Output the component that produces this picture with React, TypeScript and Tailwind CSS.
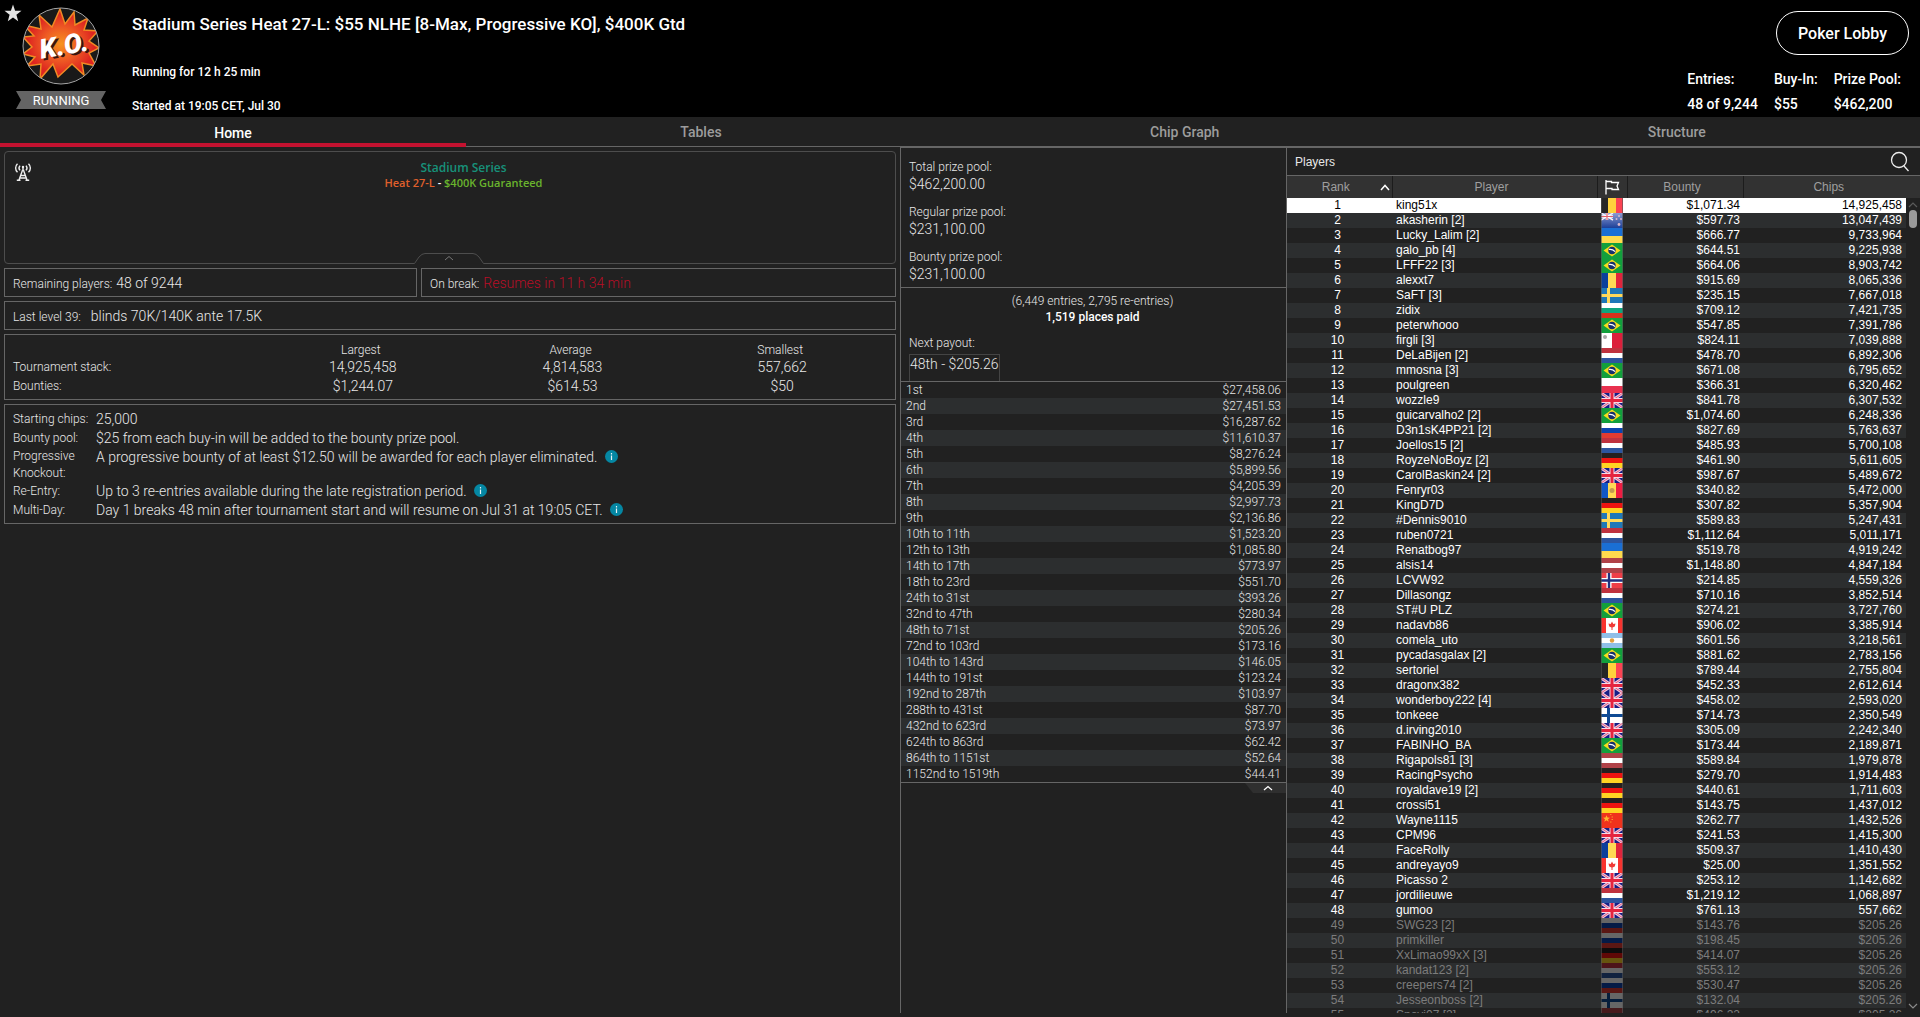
import { useState } from "react";
import type { ReactNode } from "react";

type Player = [name: string, flag: string, bounty: string, chips: string];

const players: Player[] = [
  ["king51x", "be", "$1,071.34", "14,925,458"],
  ["akasherin [2]", "nz", "$597.73", "13,047,439"],
  ["Lucky_Lalim [2]", "ua", "$666.77", "9,733,964"],
  ["galo_pb [4]", "br", "$644.51", "9,225,938"],
  ["LFFF22 [3]", "br", "$664.06", "8,903,742"],
  ["alexxt7", "ro", "$915.69", "8,065,336"],
  ["SaFT [3]", "se", "$235.15", "7,667,018"],
  ["zidix", "bg", "$709.12", "7,421,735"],
  ["peterwhooo", "br", "$547.85", "7,391,786"],
  ["firgli [3]", "mt", "$824.11", "7,039,888"],
  ["DeLaBijen [2]", "nl", "$478.70", "6,892,306"],
  ["mmosna [3]", "br", "$671.08", "6,795,652"],
  ["poulgreen", "pl", "$366.31", "6,320,462"],
  ["wozzle9", "gb", "$841.78", "6,307,532"],
  ["guicarvalho2 [2]", "br", "$1,074.60", "6,248,336"],
  ["D3n1sK4PP21 [2]", "ru", "$827.69", "5,763,637"],
  ["Joellos15 [2]", "nl", "$485.93", "5,700,108"],
  ["RoyzeNoBoyz [2]", "de", "$461.90", "5,611,605"],
  ["CarolBaskin24 [2]", "gb", "$987.67", "5,489,672"],
  ["Fenryr03", "ad", "$340.82", "5,472,000"],
  ["KingD7D", "de", "$307.82", "5,357,904"],
  ["#Dennis9010", "se", "$589.83", "5,247,431"],
  ["ruben0721", "nl", "$1,112.64", "5,011,171"],
  ["Renatbog97", "ua", "$519.78", "4,919,242"],
  ["alsis14", "lv", "$1,148.80", "4,847,184"],
  ["LCVW92", "no", "$214.85", "4,559,326"],
  ["Dillasongz", "nl", "$710.16", "3,852,514"],
  ["ST#U PLZ", "br", "$274.21", "3,727,760"],
  ["nadavb86", "ca", "$906.02", "3,385,914"],
  ["comela_uto", "ar", "$601.56", "3,218,561"],
  ["pycadasgalax [2]", "br", "$881.62", "2,783,156"],
  ["sertoriel", "be", "$789.44", "2,755,804"],
  ["dragonx382", "gb", "$452.33", "2,612,614"],
  ["wonderboy222 [4]", "gb", "$458.02", "2,593,020"],
  ["tonkeee", "fi", "$714.73", "2,350,549"],
  ["d.irving2010", "gb", "$305.09", "2,242,340"],
  ["FABINHO_BA", "br", "$173.44", "2,189,871"],
  ["Rigapols81 [3]", "lv", "$589.84", "1,979,878"],
  ["RacingPsycho", "de", "$279.70", "1,914,483"],
  ["royaldave19 [2]", "de", "$440.61", "1,711,603"],
  ["crossi51", "de", "$143.75", "1,437,012"],
  ["Wayne1115", "cn", "$262.77", "1,432,526"],
  ["CPM96", "gb", "$241.53", "1,415,300"],
  ["FaceRolly", "ro", "$509.37", "1,410,430"],
  ["andreyayo9", "ca", "$25.00", "1,351,552"],
  ["Picasso 2", "gb", "$253.12", "1,142,682"],
  ["jordilieuwe", "nl", "$1,219.12", "1,068,897"],
  ["gumoo", "gb", "$761.13", "557,662"],
  ["SWG23 [2]", "ru", "$143.76", "$205.26"],
  ["primkiller", "ru", "$198.45", "$205.26"],
  ["XxLimao99xX [3]", "de", "$414.07", "$205.26"],
  ["kandat123 [2]", "nl", "$553.12", "$205.26"],
  ["creepers74 [2]", "ru", "$530.47", "$205.26"],
  ["Jesseonboss [2]", "fi", "$132.04", "$205.26"],
  ["Snovi07 [2]", "lv", "$496.22", "$205.26"],
];

// everyone ranked below this is already out
const PLAYERS_LEFT = 48;

const payouts = [
  ["1st", "$27,458.06"],
  ["2nd", "$27,451.53"],
  ["3rd", "$16,287.62"],
  ["4th", "$11,610.37"],
  ["5th", "$8,276.24"],
  ["6th", "$5,899.56"],
  ["7th", "$4,205.39"],
  ["8th", "$2,997.73"],
  ["9th", "$2,136.86"],
  ["10th to 11th", "$1,523.20"],
  ["12th to 13th", "$1,085.80"],
  ["14th to 17th", "$773.97"],
  ["18th to 23rd", "$551.70"],
  ["24th to 31st", "$393.26"],
  ["32nd to 47th", "$280.34"],
  ["48th to 71st", "$205.26"],
  ["72nd to 103rd", "$173.16"],
  ["104th to 143rd", "$146.05"],
  ["144th to 191st", "$123.24"],
  ["192nd to 287th", "$103.97"],
  ["288th to 431st", "$87.70"],
  ["432nd to 623rd", "$73.97"],
  ["624th to 863rd", "$62.42"],
  ["864th to 1151st", "$52.64"],
  ["1152nd to 1519th", "$44.41"],
];

const tabs = ["Home", "Tables", "Chip Graph", "Structure"];

const horizontal = (a: string, b: string, c: string) => (
  <>
    <rect width="22" height="5" fill={a} />
    <rect y="5" width="22" height="5" fill={b} />
    <rect y="10" width="22" height="5" fill={c} />
  </>
);

const vertical = (a: string, b: string, c: string) => (
  <>
    <rect width="7" height="15" fill={a} />
    <rect x="7" width="8" height="15" fill={b} />
    <rect x="15" width="7" height="15" fill={c} />
  </>
);

const nordic = (bg: string, cross: string) => (
  <>
    <rect width="22" height="15" fill={bg} />
    <rect x="6" width="3" height="15" fill={cross} />
    <rect y="6" width="22" height="3" fill={cross} />
  </>
);

const flags: Record<string, ReactNode> = {
  be: vertical("#262626", "#ffd23c", "#fb4353"),
  ro: vertical("#0b3f9c", "#ffd955", "#e0243c"),
  ad: (
    <>
      {vertical("#1257c8", "#ffd955", "#ee1c42")}
      <circle cx="11" cy="7.5" r="2.5" fill="#c39a4e" />
    </>
  ),
  bg: horizontal("#ffffff", "#0fa57c", "#d8301b"),
  nl: horizontal("#c0323f", "#ffffff", "#2c559f"),
  ru: horizontal("#ffffff", "#0d44ae", "#e23b32"),
  de: horizontal("#252020", "#ee1410", "#ffd323"),
  lv: horizontal("#b04248", "#ffffff", "#b04248"),
  ar: (
    <>
      {horizontal("#8fbfe8", "#ffffff", "#8fbfe8")}
      <circle cx="11" cy="7.5" r="2.2" fill="#e0a040" />
    </>
  ),
  ua: (
    <>
      <rect width="22" height="8" fill="#1a6fd4" />
      <rect y="8" width="22" height="7" fill="#ffda4d" />
    </>
  ),
  pl: (
    <>
      <rect width="22" height="8" fill="#ffffff" />
      <rect y="8" width="22" height="7" fill="#e8314f" />
    </>
  ),
  mt: (
    <>
      <rect width="11" height="15" fill="#ffffff" />
      <rect x="11" width="11" height="15" fill="#dc1f3b" />
      <circle cx="4" cy="4" r="2" fill="#a8a8a8" />
    </>
  ),
  se: nordic("#1f78b8", "#ffd95a"),
  fi: nordic("#ffffff", "#0f4a94"),
  no: (
    <>
      <rect width="22" height="15" fill="#ee3e48" />
      <path d="M8 0v15M0 7.5h22" stroke="#fff" strokeWidth="5" />
      <path d="M8 0v15M0 7.5h22" stroke="#20317e" strokeWidth="2.4" />
    </>
  ),
  br: (
    <>
      <rect width="22" height="15" fill="#12a03c" />
      <path d="M11 1.5 19.5 7.5 11 13.5 2.5 7.5Z" fill="#f6dc1c" />
      <circle cx="11" cy="7.5" r="3.7" fill="#17306c" />
      <path d="M7.8 6.4q3.6-.6 6.3 2.2" stroke="#fff" strokeWidth="1.2" fill="none" />
    </>
  ),
  ca: (
    <>
      {vertical("#f8332f", "#ffffff", "#f8332f")}
      <rect x="5" width="2" height="15" fill="#fff" />
      <rect x="15" width="2" height="15" fill="#fff" />
      <path d="M11 3.5 12.3 6l2.2-.4-.7 3-2.3.8V12h-1V9.4L8.2 8.6l-.7-3 2.2.4Z" fill="#f03a36" />
    </>
  ),
  cn: (
    <>
      <rect width="22" height="15" fill="#f0321c" />
      <path d="M5.5 2.2l1 2.4 2.5.1-2 1.6.7 2.4-2.2-1.4-2.2 1.4.7-2.4-2-1.6 2.5-.1Z" fill="#ffb52e" />
      <path d="M9 1.5h1.5M10.5 4h1.5M10.5 6.5h1.5M9 9h1.5" stroke="#f8902a" />
    </>
  ),
  gb: (
    <>
      <rect width="22" height="15" fill="#171e86" />
      <path d="M0 0 22 15M22 0 0 15" stroke="#f3c8dc" strokeWidth="3" />
      <path d="M0 0 22 15M22 0 0 15" stroke="#dd5b80" strokeWidth="1" />
      <path d="M11 0v15M0 7.5h22" stroke="#f7dbe6" strokeWidth="5" />
      <path d="M11 0v15M0 7.5h22" stroke="#e5243f" strokeWidth="3" />
    </>
  ),
  nz: (
    <>
      <linearGradient id="nzField" x2="0" y2="1">
        <stop offset="0" stopColor="#8d9bd2" />
        <stop offset="1" stopColor="#1c3f98" />
      </linearGradient>
      <rect width="22" height="15" fill="url(#nzField)" />
      <path d="M0 0 12 7M12 0 0 7" stroke="#f2f2fa" strokeWidth="1.5" />
      <path d="M6 0v7M0 3.5h12" stroke="#fff" strokeWidth="2.5" />
      <path d="M6 0v7M0 3.5h12" stroke="#e2606c" strokeWidth="1.2" />
      <circle cx="18" cy="3" r="1" fill="#d9b8cc" />
      <circle cx="15.5" cy="6" r="1" fill="#d9b8cc" />
      <circle cx="20" cy="6" r="1" fill="#d9b8cc" />
      <circle cx="18" cy="11.5" r="1.4" fill="#d9b8cc" />
    </>
  ),
};

const Flag = ({ code, dimmed }: { code: string; dimmed: boolean }) => (
  <svg viewBox="0 0 22 15" className="block h-[15px] w-[22px]">
    {flags[code]}
    {dimmed && <rect width="22" height="15" fill="#000" opacity="0.6" />}
    <rect x="0.5" y="-1" width="21" height="17" fill="none" stroke="#555" strokeOpacity="0.6" />
  </svg>
);

const Info = ({ label }: { label: string }) => (
  <button
    type="button"
    aria-label={label}
    className="ml-1 inline-flex size-[13px] items-center justify-center rounded-full bg-[#0587a3] align-[-1px]"
  >
    <svg viewBox="0 0 13 13" className="size-[13px]">
      <path d="M6.5 3v1.5M6.5 5.5v4.5" stroke="#e8f4f7" strokeWidth="1.2" />
    </svg>
  </button>
);

const KoBadge = () => (
  <svg viewBox="0 0 78 78" className="size-[78px]">
    <defs>
      <radialGradient id="burst" cx="50%" cy="50%" r="52%">
        <stop offset="0" stopColor="#f7931e" />
        <stop offset="0.45" stopColor="#ee5a24" />
        <stop offset="0.85" stopColor="#dd2420" />
      </radialGradient>
      <clipPath id="disc">
        <circle cx="39" cy="39" r="38" />
      </clipPath>
    </defs>
    <circle cx="39" cy="39" r="38" fill="#191919" />
    <g clipPath="url(#disc)">
      <path
        d="M17 8 30 20 38 2 43 17 52 5 53 18 66 11 62 23 76 24 67 34 77 41 67 46 74 59 60 56 62 68 50 57 36 70 31 57 18 72 19 57 5 59 13 50 1 47 10 40 1 30 12 29 2 18 19 22Z"
        fill="url(#burst)"
        stroke="#f08a24"
        strokeWidth="1.5"
      />
    </g>
    <circle cx="39" cy="39" r="38" fill="none" stroke="#a5a5a5" />
    <g
      transform="rotate(-10 40 40)"
      fontFamily="Roboto, sans-serif"
      fontSize="27"
      fontWeight="900"
      fontStyle="italic"
      textAnchor="middle"
    >
      <text x="44" y="50" fill="#3a1410" aria-hidden="true">
        K.O.
      </text>
      <text x="42" y="48" fill="#fff">
        K.O.
      </text>
    </g>
  </svg>
);

const Stat = ({ label, value }: { label: string; value: string }) => (
  <div>
    <dt className="text-xs leading-4">{label}</dt>
    <dd className="text-sm leading-[18px]">{value}</dd>
  </div>
);

const Header = () => (
  <header className="flex h-[117px] shrink-0 justify-between bg-black font-medium text-white">
    <div className="flex">
      <button type="button" aria-label="Favourite" className="mt-1 ml-1 size-[18px]">
        <svg viewBox="0 0 18 18" className="size-[18px]">
          <path
            d="M9 0.5 11.1 6.7 17.5 6.8 12.4 10.8 14.2 17.2 9 13.5 3.8 17.2 5.6 10.8 0.5 6.8 6.9 6.7Z"
            fill="#e4e4e4"
          />
        </svg>
      </button>
      <div className="ml-[-6px] flex w-[90px] flex-col items-center pt-[7px]">
        <KoBadge />
        <div className="relative mt-[6px] flex h-[18px] w-[90px] items-center justify-center">
          <svg viewBox="0 0 90 18" className="absolute inset-0 h-[18px] w-[90px]">
            <path d="M0 0H90L85 9 90 18H0L5 9Z" fill="#646464" />
          </svg>
          <span className="relative pt-px text-[13px] font-normal">RUNNING</span>
        </div>
      </div>
      <div className="ml-[26px]">
        <h1 className="mt-[14px] text-[17px] leading-5">
          Stadium Series Heat 27-L: $55 NLHE [8-Max, Progressive KO], $400K Gtd
        </h1>
        <p className="mt-[30px] text-xs leading-4">Running for 12 h 25 min</p>
        <p className="mt-[18px] text-xs leading-4">Started at 19:05 CET, Jul 30</p>
      </div>
    </div>
    <div className="flex flex-col items-end pt-[11px] pr-[11px]">
      <button
        type="button"
        className="h-11 w-[133px] rounded-full border border-white pt-px text-base"
      >
        Poker Lobby
      </button>
      <dl className="mt-[15px] mr-2 flex gap-4 text-sm">
        <div>
          <dt className="leading-[18px]">Entries:</dt>
          <dd className="mt-[7px] leading-[18px]">48 of 9,244</dd>
        </div>
        <div>
          <dt className="leading-[18px]">Buy-In:</dt>
          <dd className="mt-[7px] leading-[18px]">$55</dd>
        </div>
        <div>
          <dt className="leading-[18px]">Prize Pool:</dt>
          <dd className="mt-[7px] leading-[18px]">$462,200</dd>
        </div>
      </dl>
    </div>
  </header>
);

const Summary = () => (
  <section className="flex min-w-0 flex-col gap-1 px-1 pt-1">
    <div className="relative flex h-[113px] rounded border border-[#4d4d4d]">
      <svg viewBox="0 0 18 18" className="mt-[11px] ml-[9px] size-[18px]" fill="none" stroke="#eee" strokeWidth="1.4">
        <path d="M3.5 0.8C1 3.2 1 6.8 3.5 9.2M6 2.6C4.8 4 4.8 6 6 7.4M14.5 0.8C17 3.2 17 6.8 14.5 9.2M12 2.6C13.2 4 13.2 6 12 7.4" />
        <path d="M9 3.5V7M8.6 7 5 17M9.4 7 13 17M7 12.5H11M6 15 12.4 15M2.8 17.3H6.5M11.5 17.3H15.2" />
        <circle cx="9" cy="4" r="1.2" fill="#eee" stroke="none" />
      </svg>
      <div className="flex-1 pt-2 text-center font-['Open_Sans',sans-serif]">
        <p className="text-xs leading-4 font-semibold text-[#17917a]">Stadium Series</p>
        <p className="text-[11px] leading-[13px] font-semibold text-white">
          <span className="text-[#e0602c]">Heat 27-L</span> -{" "}
          <span className="text-[#6ab42d]">$400K Guaranteed</span>
        </p>
      </div>
      <button
        type="button"
        aria-label="Collapse"
        className="absolute bottom-[-1px] left-[408px] h-[11px] w-[72px]"
      >
        <svg viewBox="0 0 72 11" className="h-[11px] w-[72px]" fill="none" stroke="#4d4d4d">
          <path d="M1 10.5H71" stroke="#212121" />
          <path d="M0 10.5H1.5L6 4Q9 .5 12 .5H60Q63 .5 66 4L70.5 10.5H72" />
          <path d="M32 7 36 3.5 40 7" stroke="#777" />
        </svg>
      </button>
    </div>

    <div className="grid grid-cols-[413fr_475fr] gap-1 text-xs">
      <p className="flex h-[29px] items-baseline gap-1 border border-[#666] px-2 leading-[28px]">
        Remaining players: <span className="text-sm leading-[28px]">48 of 9244</span>
      </p>
      <p className="flex h-[29px] items-baseline gap-1 border border-[#666] px-2 leading-[28px]">
        On break:
        <span className="text-sm leading-[28px] text-[#b80d26]">Resumes in 11 h 34 min</span>
      </p>
    </div>

    <p className="flex h-[29px] items-baseline gap-[10px] border border-[#666] px-2 text-xs leading-[28px]">
      Last level 39: <span className="text-sm leading-[28px]">blinds 70K/140K ante 17.5K</span>
    </p>

    <div className="border border-[#666] px-2 pt-[7px] pb-[3px]">
      <table className="w-full table-fixed text-center text-sm leading-[19px]">
        <thead>
          <tr className="text-xs leading-4">
            <td className="w-[245px] p-0" />
            <th className="p-0 pr-1 font-light">Largest</th>
            <th className="p-0 pr-1 font-light">Average</th>
            <th className="p-0 pr-1 font-light">Smallest</th>
          </tr>
        </thead>
        <tbody>
          <tr>
            <th className="p-0 text-left text-xs leading-[19px] font-light">Tournament stack:</th>
            <td className="p-0">14,925,458</td>
            <td className="p-0">4,814,583</td>
            <td className="p-0">557,662</td>
          </tr>
          <tr>
            <th className="p-0 text-left text-xs leading-[19px] font-light">Bounties:</th>
            <td className="p-0">$1,244.07</td>
            <td className="p-0">$614.53</td>
            <td className="p-0">$50</td>
          </tr>
        </tbody>
      </table>
    </div>

    <dl className="grid grid-cols-[83px_1fr] border border-[#666] px-2 pt-[5px] pb-[3px] text-sm leading-[19px]">
      <dt className="text-xs leading-[19px]">Starting chips:</dt>
      <dd>25,000</dd>
      <dt className="text-xs leading-[19px]">Bounty pool:</dt>
      <dd>$25 from each buy-in will be added to the bounty prize pool.</dd>
      <dt className="text-xs leading-[17px]">
        Progressive
        <br />
        Knockout:
      </dt>
      <dd>
        A progressive bounty of at least $12.50 will be awarded for each player eliminated.{" "}
        <Info label="About progressive knockout" />
      </dd>
      <dt className="text-xs leading-[19px]">Re-Entry:</dt>
      <dd>
        Up to 3 re-entries available during the late registration period.{" "}
        <Info label="About re-entry" />
      </dd>
      <dt className="text-xs leading-[19px]">Multi-Day:</dt>
      <dd>
        Day 1 breaks 48 min after tournament start and will resume on Jul 31 at 19:05 CET.{" "}
        <Info label="About multi-day" />
      </dd>
    </dl>
  </section>
);

const Payouts = () => (
  <section className="min-w-0 border-x border-t border-[#666]">
    <dl className="flex h-[140px] flex-col gap-[11px] border-b border-[#666] pt-[11px] pl-2">
      <Stat label="Total prize pool:" value="$462,200.00" />
      <Stat label="Regular prize pool:" value="$231,100.00" />
      <Stat label="Bounty prize pool:" value="$231,100.00" />
    </dl>
    <div className="flex h-[94px] flex-col border-b border-[#666] pt-[5px] pl-2 text-xs leading-4">
      <p className="pr-[10px] text-center">(6,449 entries, 2,795 re-entries)</p>
      <p className="pr-[10px] text-center font-medium text-white">1,519 places paid</p>
      <p className="mt-[10px]">Next payout:</p>
      <p className="mt-[3px] w-fit flex-1 border border-b-0 border-[#444] text-sm leading-[18px]">
        48th - $205.26
      </p>
    </div>
    <table className="w-full border-b border-[#666] text-xs leading-4">
      <tbody>
        {payouts.map(([place, amount]) => (
          <tr key={place} className="even:bg-[#2c2e2f]">
            <td className="p-0 pl-[5px]">{place}</td>
            <td className="p-0 pr-[5px] text-right">{amount}</td>
          </tr>
        ))}
      </tbody>
    </table>
    <button type="button" aria-label="Collapse payouts" className="ml-auto block h-[10px] w-[41px]">
      <svg viewBox="0 0 41 10" className="h-[10px] w-[41px]">
        <path d="M0 0H41V10H8Z" fill="#2f2f2f" />
        <path d="M19 7 23 3.5 27 7" fill="none" stroke="#fff" strokeWidth="1.3" />
      </svg>
    </button>
  </section>
);

const Players = () => (
  <section className="flex min-h-0 min-w-0 flex-col border-t border-[#666] font-['Liberation_Sans',sans-serif] text-xs font-normal">
    <div className="flex h-7 shrink-0 items-center justify-between border-b border-[#666] pr-[10px] pl-2">
      <h2 className="text-[#e8e8e8]">Players</h2>
      <button type="button" aria-label="Search players">
        <svg viewBox="0 0 20 22" className="h-[22px] w-5" fill="none" stroke="#eee" strokeWidth="1.3">
          <circle cx="9" cy="9" r="7.5" />
          <path d="M14 15 18.5 20" />
        </svg>
      </button>
    </div>
    <div className="relative min-h-0 flex-1 overflow-hidden">
      <table className="w-full table-fixed border-collapse leading-[15px]">
        <colgroup>
          <col className="w-[105px]" />
          <col />
          <col className="w-[30px]" />
          <col className="w-[116px]" />
          <col className="w-[163px]" />
          <col className="w-[14px]" />
        </colgroup>
        <thead>
          <tr className="h-[22px] bg-[#323232] text-[#9f9f9f]">
            <th className="border-r border-[#1c1c1c] p-0 font-normal">
              <div className="flex items-center pr-[2px] pl-[5px]">
                <span className="flex-1 text-center">Rank</span>
                <svg viewBox="0 0 10 7" className="mt-px h-[7px] w-[10px]" fill="none" stroke="#fff" strokeWidth="1.5">
                  <path d="M1 6 5 1.5 9 6" />
                </svg>
              </div>
            </th>
            <th className="border-r border-[#1c1c1c] p-0 pr-[6px] font-normal">Player</th>
            <th className="border-r border-[#1c1c1c] p-0" aria-label="Country">
              <svg viewBox="0 0 16 16" className="mx-auto size-4" fill="none" stroke="#fff" strokeWidth="1.3">
                <path d="M2 1V15.5M2 2.5H7.5V3.5H14.5L13 7 14.5 10.5H8V9.5H2" />
              </svg>
            </th>
            <th className="border-r border-[#1c1c1c] p-0 pr-[6px] font-normal">Bounty</th>
            <th colSpan={2} className="p-0 pr-[6px] font-normal">
              Chips
            </th>
          </tr>
        </thead>
        <tbody>
          {players.map(([name, flag, bounty, chips], i) => {
            const out = i >= PLAYERS_LEFT;
            const cell =
              i === 0 ? "bg-white text-black" : i % 2 ? "bg-[#2c2e2f]" : "bg-[#212121]";
            return (
              <tr key={name} className={out ? "text-[#7c7c7c]" : "text-white"}>
                <td className={`p-0 pr-1 text-center ${cell}`}>{i + 1}</td>
                <td className={`p-0 pl-1 ${cell}`}>{name}</td>
                <td className={`p-0 pl-1 ${cell}`}>
                  <Flag code={flag} dimmed={out} />
                </td>
                <td className={`p-0 pr-[3px] text-right ${cell}`}>{bounty}</td>
                <td className={`p-0 pr-1 text-right ${cell}`}>{chips}</td>
                <td />
              </tr>
            );
          })}
        </tbody>
      </table>
      <div className="absolute top-[22px] right-0 bottom-0 flex w-[14px] flex-col items-center py-1">
        <svg viewBox="0 0 10 6" className="h-[6px] w-[10px]" fill="none" stroke="#5a5a5a" strokeWidth="1.2">
          <path d="M1 5 5 1 9 5" />
        </svg>
        <div className="mt-[2px] h-[18px] w-2 rounded-full bg-[#9a9a9a]" />
        <svg viewBox="0 0 10 6" className="mt-auto h-[6px] w-[10px]" fill="none" stroke="#8a8a8a" strokeWidth="1.2">
          <path d="M1 1 5 5 9 1" />
        </svg>
      </div>
    </div>
  </section>
);

const App = () => {
  const [active, setActive] = useState("Home");

  return (
    <div className="flex h-screen flex-col overflow-hidden bg-[#212121] pb-1 font-['Roboto',sans-serif] font-light text-[#e8e8e8]">
      <Header />
      <nav className="flex h-[30px] shrink-0 text-sm font-medium">
        {tabs.map((tab) => (
          <button
            key={tab}
            type="button"
            onClick={() => setActive(tab)}
            className={`flex-auto ${
              tab === active
                ? "border-b-4 border-[#c41230] pt-[5px] text-white"
                : "border-b border-[#666] text-[#9c9c9c]"
            }`}
          >
            {tab}
          </button>
        ))}
      </nav>
      <main className="grid min-h-0 flex-1 grid-cols-[900fr_387fr_633fr] grid-rows-[minmax(0,1fr)]">
        <Summary />
        <Payouts />
        <Players />
      </main>
    </div>
  );
};

export default App;
